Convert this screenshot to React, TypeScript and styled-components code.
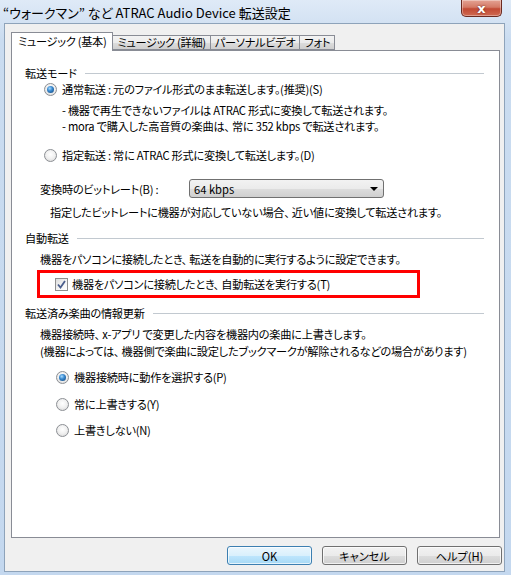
import styled, { createGlobalStyle } from "styled-components";

const GlobalStyle = createGlobalStyle`
  html, body {
    margin: 0;
    padding: 0;
    background: #fff;
  }
  body {
    font-family: "Noto Sans CJK JP", "Noto Sans", sans-serif;
    font-size: 11.2px;
    color: #000;
    font-feature-settings: "palt";
  }
  * {
    box-sizing: border-box;
  }
`;

const Window = styled.div`
  width: 511px;
  height: 575px;
  display: flex;
  flex-direction: column;
  background: linear-gradient(#dfeaf7 0px, #cadcf0 40px, #c4d8ef 100%);
  padding: 0 6px 3px 4px;
`;

const TitleBar = styled.div`
  height: 23px;
  display: flex;
  justify-content: space-between;
  align-items: flex-start;
`;

const Title = styled.div`
  font-size: 13px;
  line-height: 16px;
  padding: 5px 0 0 0;
  margin-left: -1px;
  color: #000;
`;

const CloseButton = styled.div`
  width: 41px;
  height: 17px;
  margin-right: 3px;
  border: 1px solid #6b2a20;
  border-top: none;
  border-radius: 0 0 5px 5px;
  background: linear-gradient(#e4a394 0%, #d47a66 45%, #c24a34 55%, #cf6a52 100%);
  box-shadow: inset 0 0 0 1px rgba(255, 255, 255, 0.35);
  display: flex;
  align-items: center;
  justify-content: center;
  color: #fff;
  font-family: "DejaVu Sans", sans-serif;
  font-weight: bold;
  font-size: 13px;
  line-height: 13px;
  text-shadow: 0 0 2px #5a1a10;
`;

const Body = styled.div`
  flex: 1;
  display: flex;
  flex-direction: column;
  background: #f0f0f0;
  border: 1px solid #8ea3ba;
  padding: 8px 2px 6px 6px;
`;

const TabBar = styled.div`
  display: flex;
  align-items: flex-end;
  height: 18px;
  position: relative;
  z-index: 1;
  letter-spacing: -0.3px;
`;

const Tab = styled.div<{ $active?: boolean }>`
  height: ${(p) => (p.$active ? "19px" : "15px")};
  margin-bottom: ${(p) => (p.$active ? "-1px" : "0")};
  padding: 0 ${(p) => (p.$active ? "6px" : "4px")};
  border: 1px solid #898c95;
  border-bottom: ${(p) => (p.$active ? "none" : "1px solid #898c95")};
  margin-left: ${(p) => (p.$active ? "0" : "-1px")};
  background: ${(p) =>
    p.$active ? "#fff" : "linear-gradient(#f3f3f3 0%, #ebebeb 50%, #dddddd 51%, #cfcfcf 100%)"};
  line-height: ${(p) => (p.$active ? "17px" : "13px")};
  white-space: nowrap;
`;

const Panel = styled.div`
  flex: 1;
  background: #fff;
  border: 1px solid #898c95;
  margin-right: 2px;
  padding: 14px 15px 0 13px;
  display: flex;
  flex-direction: column;
  letter-spacing: -0.25px;
`;

const GroupHeader = styled.div<{ $top?: number }>`
  display: flex;
  align-items: center;
  gap: 8px;
  height: 16px;
  line-height: 16px;
  margin-top: ${(p) => p.$top ?? 0}px;
  white-space: nowrap;

  &::after {
    content: "";
    flex: 1;
    height: 1px;
    background: #c2c9d0;
  }
`;

const Row = styled.div<{ $indent?: number; $top?: number }>`
  display: flex;
  align-items: center;
  height: 16px;
  line-height: 16px;
  margin-left: ${(p) => p.$indent ?? 0}px;
  margin-top: ${(p) => p.$top ?? 0}px;
  white-space: nowrap;
  gap: 5px;
`;

const RadioMark = styled.span<{ $checked?: boolean }>`
  width: 13px;
  height: 13px;
  border-radius: 50%;
  border: 1px solid #8c8f94;
  background: radial-gradient(circle at 50% 40%, #ffffff 0%, #f0f0f0 50%, #d2d2d2 100%);
  display: inline-flex;
  align-items: center;
  justify-content: center;
  flex: none;

  &::after {
    content: "";
    display: ${(p) => (p.$checked ? "block" : "none")};
    width: 7px;
    height: 7px;
    border-radius: 50%;
    background: radial-gradient(circle at 40% 35%, #a9dcff 0%, #3a8ad0 40%, #0d3e72 100%);
  }
`;

const CheckMark = styled.span`
  width: 13px;
  height: 13px;
  border: 1px solid #8f8f8f;
  background: linear-gradient(135deg, #dcdcdc 0%, #f6f6f6 60%, #ffffff 100%);
  display: inline-flex;
  align-items: center;
  justify-content: center;
  flex: none;
`;

const Highlight = styled.div`
  margin-left: 12px;
  margin-top: 3px;
  width: 383px;
  height: 28px;
  border: 3px solid #f00;
  display: flex;
  align-items: center;
  padding-left: 15px;
  gap: 4px;
  white-space: nowrap;
`;

const Select = styled.div`
  width: 195px;
  height: 19px;
  margin-left: auto;
  margin-right: 100px;
  border: 1px solid #707070;
  border-radius: 3px;
  background: linear-gradient(#f2f2f2 0%, #ebebeb 50%, #dddddd 51%, #cfcfcf 100%);
  display: flex;
  align-items: center;
  justify-content: space-between;
  padding: 0 5px 0 4px;
  letter-spacing: 0;
`;

const Arrow = styled.span`
  width: 0;
  height: 0;
  border-left: 4px solid transparent;
  border-right: 4px solid transparent;
  border-top: 4px solid #000;
`;

const ButtonRow = styled.div`
  display: flex;
  justify-content: flex-end;
  gap: 10px;
  margin-top: 8px;
`;

const Button = styled.div<{ $default?: boolean }>`
  width: 85px;
  height: 19px;
  border: 1px solid ${(p) => (p.$default ? "#3c7fb1" : "#707070")};
  border-radius: 3px;
  background: ${(p) =>
    p.$default
      ? "linear-gradient(#eaf6fd 0%, #d9f0fc 50%, #bee6fd 51%, #a7d9f5 100%)"
      : "linear-gradient(#f2f2f2 0%, #ebebeb 50%, #dddddd 51%, #cfcfcf 100%)"};
  box-shadow: inset 0 0 0 1px rgba(255, 255, 255, 0.7);
  display: flex;
  align-items: center;
  justify-content: center;
  line-height: 16px;
`;

function Radio({ checked, children }: { checked?: boolean; children: React.ReactNode }) {
  return (
    <>
      <RadioMark $checked={checked} />
      <span>{children}</span>
    </>
  );
}

export default function App() {
  return (
    <>
      <GlobalStyle />
      <Window>
        <TitleBar>
          <Title>“ウォークマン” など ATRAC Audio Device 転送設定</Title>
          <CloseButton>x</CloseButton>
        </TitleBar>
        <Body>
          <TabBar>
            <Tab $active>ミュージック (基本)</Tab>
            <Tab>ミュージック (詳細)</Tab>
            <Tab>パーソナルビデオ</Tab>
            <Tab>フォト</Tab>
          </TabBar>
          <Panel>
            <GroupHeader>転送モード</GroupHeader>
            <Row $indent={19}>
              <Radio checked>通常転送 : 元のファイル形式のまま転送します。(推奨)(S)</Radio>
            </Row>
            <Row $indent={37} $top={5}>- 機器で再生できないファイルは ATRAC 形式に変換して転送されます。</Row>
            <Row $indent={37}>- mora で購入した高音質の楽曲は、 常に 352 kbps で転送されます。</Row>
            <Row $indent={19} $top={13}>
              <Radio>指定転送 : 常に ATRAC 形式に変換して転送します。(D)</Radio>
            </Row>
            <Row $indent={15} $top={16} style={{ height: 19 }}>
              <span>変換時のビットレート(B) :</span>
              <Select>
                <span>64 kbps</span>
                <Arrow />
              </Select>
            </Row>
            <Row $indent={25} $top={6}>指定したビットレートに機器が対応していない場合、 近い値に変換して転送されます。</Row>

            <GroupHeader $top={10}>自動転送</GroupHeader>
            <Row $indent={15} $top={5}>機器をパソコンに接続したとき、 転送を自動的に実行するように設定できます。</Row>
            <Highlight>
              <CheckMark>
                <svg width="9" height="9" viewBox="0 0 9 9">
                  <path d="M1 4.5 L3.5 7.5 L8 1" fill="none" stroke="#4a5d8c" strokeWidth="1.8" />
                </svg>
              </CheckMark>
              <span>機器をパソコンに接続したとき、 自動転送を実行する(T)</span>
            </Highlight>

            <GroupHeader $top={7}>転送済み楽曲の情報更新</GroupHeader>
            <Row $indent={15} $top={5}>機器接続時、 x-アプリ で変更した内容を機器内の楽曲に上書きします。</Row>
            <Row $indent={15} $top={1}>(機器によっては、 機器側で楽曲に設定したブックマークが解除されるなどの場合があります)</Row>
            <Row $indent={31} $top={10}>
              <Radio checked>機器接続時に動作を選択する(P)</Radio>
            </Row>
            <Row $indent={31} $top={11}>
              <Radio>常に上書きする(Y)</Radio>
            </Row>
            <Row $indent={31} $top={10}>
              <Radio>上書きしない(N)</Radio>
            </Row>
          </Panel>
          <ButtonRow>
            <Button $default>OK</Button>
            <Button>キャンセル</Button>
            <Button>ヘルプ(H)</Button>
          </ButtonRow>
        </Body>
      </Window>
    </>
  );
}
